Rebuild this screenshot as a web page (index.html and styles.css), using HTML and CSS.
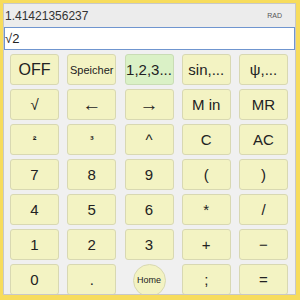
FILE: index.html
```html
<!DOCTYPE html>
<html>
  <head>
    <title>Rechner</title>
    <meta charset='utf-8'>
    <link rel="stylesheet" href="styles.css">
  </head>
  <body>
    <div id='calc'>
      <div class='result'>
        <span id='result-value'>1.41421356237</span>
        <span class='mode'>RAD</span>
      </div>
      <div class='entry'>√2</div>
      <div class='keys'>
        <div class='key big'>OFF</div>
        <div class='key small'>Speicher</div>
        <div class='key green'>1,2,3...</div>
        <div class='key'>sin,...</div>
        <div class='key'>ψ,...</div>

        <div class='key'>√</div>
        <div class='key arrow'>←</div>
        <div class='key arrow'>→</div>
        <div class='key'>M in</div>
        <div class='key'>MR</div>

        <div class='key tiny'>²</div>
        <div class='key tiny'>³</div>
        <div class='key'>^</div>
        <div class='key'>C</div>
        <div class='key'>AC</div>

        <div class='key'>7</div>
        <div class='key'>8</div>
        <div class='key'>9</div>
        <div class='key'>(</div>
        <div class='key'>)</div>

        <div class='key'>4</div>
        <div class='key'>5</div>
        <div class='key'>6</div>
        <div class='key'>*</div>
        <div class='key'>/</div>

        <div class='key'>1</div>
        <div class='key'>2</div>
        <div class='key'>3</div>
        <div class='key'>+</div>
        <div class='key'>−</div>

        <div class='key'>0</div>
        <div class='key'>.</div>
        <div class='home-cell'><div class='home'>Home</div></div>
        <div class='key'>;</div>
        <div class='key'>=</div>
      </div>
    </div>
  </body>
</html>
```

FILE: styles.css
```css
body {
  font-family: Arial, "Liberation Sans", Helvetica, sans-serif;
  background: #f7dc5c;
  color: #222;
  margin: 0;
  padding: 3px 4px 5px 3px;
  width: 293px;
  height: 292px;
}

#calc {
  border: 1px solid #c8c8c8;
  background: #f0f0f0;
  height: 290px;
  overflow: hidden;
}

/* Display lines */
.result {
  background: #ececec;
  height: 23px;
  display: flex;
  align-items: center;
  justify-content: space-between;
  padding: 0 13px 0 1px;
  font-size: 12px;
  color: #333;
}
.mode {
  font-size: 7px;
  color: #555;
}
.entry {
  background: #fff;
  border: 1px solid #6f95cf;
  height: 21px;
  line-height: 21px;
  font-size: 13px;
  color: #222;
}

/* Keypad */
.keys {
  display: grid;
  grid-template-columns: repeat(5, 49px);
  grid-auto-rows: 31px;
  column-gap: 8.25px;
  row-gap: 4px;
  padding: 4px 0 0 6px;
}
.key {
  background: #f3f3c3;
  border: 1px solid #d8d8b2;
  border-radius: 3px;
  display: flex;
  align-items: center;
  justify-content: center;
  font-size: 15px;
  color: #222;
}
.key.big { font-size: 16px; }
.key.small { font-size: 11px; }
.key.tiny { font-size: 11px; font-weight: bold; }
.key.arrow { font-size: 19px; }
.key.green { background: #daf1c6; border-color: #c9dcb5; }

.home-cell {
  display: flex;
  align-items: center;
  justify-content: center;
}
.home {
  width: 31px;
  height: 31px;
  flex: none;
  border-radius: 50%;
  background: #f3f3c3;
  border: 1px solid #d8d8b2;
  display: flex;
  align-items: center;
  justify-content: center;
  font-size: 9px;
  margin-top: 1px;
}
```
